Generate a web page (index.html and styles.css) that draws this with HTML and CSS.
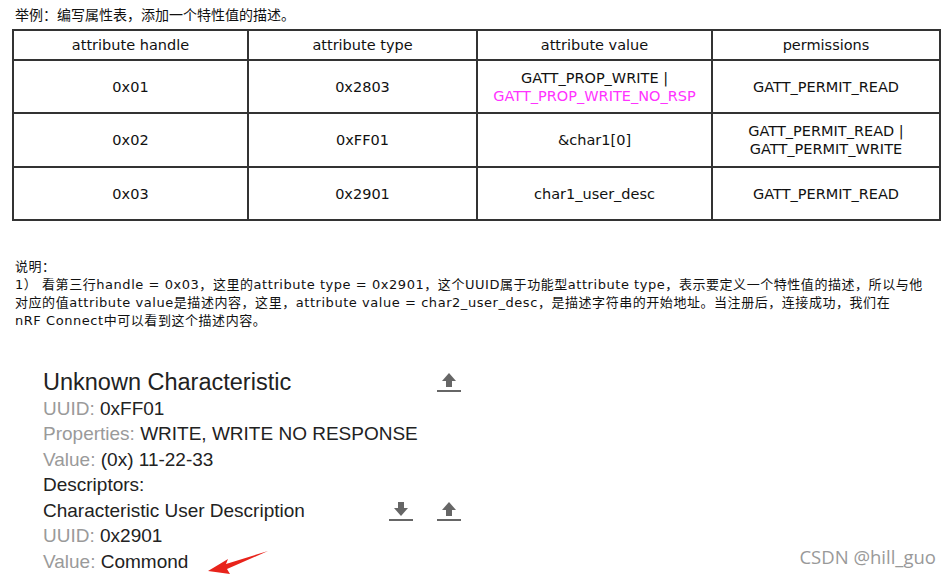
FILE: index.html
```html
<!DOCTYPE html>
<html lang="zh-CN">
<head>
    <meta charset="UTF-8">
    <meta name="viewport" content="width=device-width, initial-scale=1.0">
    <title>属性表示例</title>
    <link rel="stylesheet" href="styles.css">
</head>
<body>
    <p class="lead">举例：编写属性表，添加一个特性值的描述。</p>

    <table class="attr-table">
        <tr class="head">
            <th class="c1">attribute handle</th>
            <th class="c2">attribute type</th>
            <th class="c3">attribute value</th>
            <th class="c4">permissions</th>
        </tr>
        <tr class="r1">
            <td>0x01</td>
            <td>0x2803</td>
            <td>GATT_PROP_WRITE |<br><span class="pink">GATT_PROP_WRITE_NO_RSP</span></td>
            <td>GATT_PERMIT_READ</td>
        </tr>
        <tr class="r2">
            <td>0x02</td>
            <td>0xFF01</td>
            <td>&amp;char1[0]</td>
            <td>GATT_PERMIT_READ |<br>GATT_PERMIT_WRITE</td>
        </tr>
        <tr class="r3">
            <td>0x03</td>
            <td>0x2901</td>
            <td>char1_user_desc</td>
            <td>GATT_PERMIT_READ</td>
        </tr>
    </table>

    <div class="notes">
        <span class="line">说明：</span>
        <span class="line">1） 看第三行handle = 0x03，这里的attribute type = 0x2901，这个UUID属于功能型attribute type，表示要定义一个特性值的描述，所以与他</span>
        <span class="line">对应的值attribute value是描述内容，这里，attribute value = char2_user_desc，是描述字符串的开始地址。当注册后，连接成功，我们在</span>
        <span class="line">nRF Connect中可以看到这个描述内容。</span>
    </div>

    <div class="phone">
        <div class="row title">
            <span>Unknown Characteristic</span>
            <span class="icons">
                <svg class="ico" width="24" height="22" viewBox="0 0 24 22"><path d="M12 2 L5 10 H9 V16 H15 V10 H19 Z" fill="#666"/><rect x="0" y="19" width="24" height="2" fill="#666"/></svg>
            </span>
        </div>
        <div class="row"><span><span class="lbl">UUID:</span> 0xFF01</span></div>
        <div class="row"><span><span class="lbl">Properties:</span> WRITE, WRITE NO RESPONSE</span></div>
        <div class="row"><span><span class="lbl">Value:</span> (0x) 11-22-33</span></div>
        <div class="row"><span>Descriptors:</span></div>
        <div class="row">
            <span>Characteristic User Description</span>
            <span class="icons">
                <svg class="ico" width="24" height="22" viewBox="0 0 24 22"><path d="M12 16 L5 8 H9 V2 H15 V8 H19 Z" fill="#666"/><rect x="0" y="19" width="24" height="2" fill="#666"/></svg>
                <svg class="ico" width="24" height="22" viewBox="0 0 24 22"><path d="M12 2 L5 10 H9 V16 H15 V10 H19 Z" fill="#666"/><rect x="0" y="19" width="24" height="2" fill="#666"/></svg>
            </span>
        </div>
        <div class="row"><span><span class="lbl">UUID:</span> 0x2901</span></div>
        <div class="row"><span><span class="lbl">Value:</span> Commond</span>
            <svg class="arrow" width="64" height="26" viewBox="0 0 64 26"><path d="M62 2 L20 15 L22 10 L2 22 L24 25 L21 20 Z" fill="#e8231b"/></svg>
        </div>
    </div>

    <div class="mark">CSDN @hill_guo</div>
</body>
</html>
```

FILE: styles.css
```css
/* page */
body { margin: 0; background: #fff; color: #111; font-family: "Liberation Sans", "Noto Sans CJK SC", sans-serif; position: relative; height: 579px; overflow: hidden; }
.lead { margin: 0; padding: 6px 0 0 15px; font-size: 14px; line-height: 18px; }

/* attribute table */
.attr-table { margin: 5px 0 0 12px; border-collapse: collapse; width: 929px; font-family: "DejaVu Sans", sans-serif; font-size: 14.5px; color: #111; }
.attr-table th, .attr-table td { border: 2px solid #333; text-align: center; font-weight: normal; padding: 0; line-height: 18px; }
.attr-table .c1 { width: 233px; }
.attr-table .c2 { width: 227px; }
.attr-table .c3 { width: 233px; }
.attr-table .head { height: 30px; }
.attr-table .r1 { height: 53px; }
.attr-table .r2 { height: 54px; }
.attr-table .r3 { height: 53px; }
.pink { color: #ff33ff; }

/* notes */
.notes { margin: 37px 0 0 15px; font-size: 13px; line-height: 18px; font-family: "DejaVu Sans", "Noto Sans CJK SC", sans-serif; letter-spacing: 0.55px; }
.notes .line { display: block; white-space: nowrap; }

/* phone screenshot */
.phone { margin: 38px 0 0 43px; width: 420px; font-family: "Liberation Sans", sans-serif; font-size: 19px; color: #222; }
.phone .row { display: flex; align-items: center; justify-content: space-between; height: 25.5px; position: relative; }
.phone .title { font-size: 23.5px; height: 28px; }
.phone .lbl { color: #9a9a9a; }
.phone .icons { display: flex; gap: 24px; margin-right: 2px; }
.phone .ico { display: block; }
.phone .arrow { position: absolute; left: 163px; top: 0; }

.mark { position: absolute; right: 15px; bottom: 10px; font-family: "Open Sans", sans-serif; font-size: 18.5px; color: #999; }
```
